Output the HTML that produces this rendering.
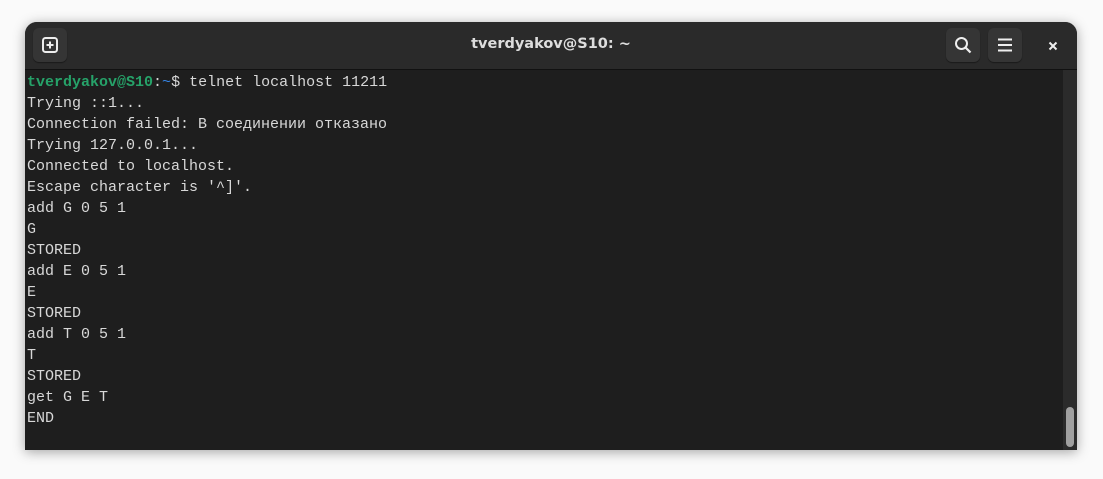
<!DOCTYPE html>
<html><head><meta charset="utf-8"><style>
html,body{margin:0;padding:0;background:#fafafa;width:1103px;height:479px;overflow:hidden}
.win{position:absolute;left:25px;top:22px;width:1052px;height:428px;background:#1e1e1e;border-radius:12px 12px 0 0;box-shadow:0 2px 12px rgba(0,0,0,.35);overflow:hidden}
.hdr{position:absolute;left:0;top:0;width:1052px;height:47px;background:#2a2a2a;border-bottom:1px solid #111}
.btn{position:absolute;top:6px;width:34px;height:34px;border-radius:6px;background:#353535;box-shadow:0 1px 1px rgba(0,0,0,.4)}
.title{position:absolute;left:0;width:1052px;top:14px;text-align:center;font:bold 14.5px "DejaVu Sans","Liberation Sans",sans-serif;color:#ddd}
.term{position:absolute;left:2px;top:50px;font:15px/21px "Liberation Mono",monospace;color:#d8d8d8;white-space:pre}
.g{color:#26a269;font-weight:bold}.b{color:#3584e4}
.sb{position:absolute;left:1038px;top:48px;width:14px;height:380px;background:#2b2b2b}
.th{position:absolute;left:3px;top:337px;width:8px;height:40px;border-radius:4px;background:#a0a0a0}
</style></head><body>
<div class="win">
<div class="hdr">
<div class="btn" style="left:8px"><svg width="34" height="34"><rect x="10" y="10" width="14" height="14" rx="2.5" fill="none" stroke="#eee" stroke-width="2"/><path d="M17 13.5v7M13.5 17h7" stroke="#eee" stroke-width="2"/></svg></div>
<div class="title">tverdyakov@S10: ~</div>
<div class="btn" style="left:921px"><svg width="34" height="34"><circle cx="15.5" cy="15.5" r="5.5" fill="none" stroke="#eee" stroke-width="2"/><path d="M19.5 19.5l5 5" stroke="#eee" stroke-width="2.2"/></svg></div>
<div class="btn" style="left:963px"><svg width="34" height="34"><path d="M10 11.5h14M10 17h14M10 22.5h14" stroke="#eee" stroke-width="2"/></svg></div>
<svg style="position:absolute;left:1022px;top:18px" width="12" height="12"><path d="M2.5 2.5l7 7M9.5 2.5l-7 7" stroke="#eee" stroke-width="2"/></svg>
</div>
<div class="term"><span class="g">tverdyakov@S10</span>:<span class="b">~</span>$ telnet localhost 11211
Trying ::1...
Connection failed: В соединении отказано
Trying 127.0.0.1...
Connected to localhost.
Escape character is '^]'.
add G 0 5 1
G
STORED
add E 0 5 1
E
STORED
add T 0 5 1
T
STORED
get G E T
END</div>
<div class="sb"><div class="th"></div></div>
</div>
</body></html>
